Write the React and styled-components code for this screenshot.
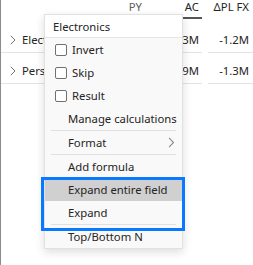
import React from "react";
import styled, { createGlobalStyle } from "styled-components";

const GlobalStyle = createGlobalStyle`
  html, body {
    margin: 0;
    padding: 0;
    background: #ffffff;
  }
  body {
    font-family: "Noto Sans", "Open Sans", sans-serif;
    font-size: 11.3px;
    color: #252423;
  }
`;

const Page = styled.div`
  position: relative;
  width: 253px;
  height: 265px;
  box-sizing: border-box;
  border-left: 1px solid #8c8c8c;
  overflow: hidden;
`;

const Table = styled.div`
  display: grid;
  grid-template-columns: 99px 40px 50px 45px;
  column-gap: 6px;
`;

const HeadCell = styled.div`
  height: 19px;
  margin-bottom: 3px;
  padding-top: 1px;
  box-sizing: border-box;
  border-bottom: 2px solid ${(p) => (p.$active ? "#555555" : "transparent")};
  text-align: right;
  padding-right: ${(p) => p.$pad || 4}px;
  line-height: 11px;
  color: ${(p) => (p.$muted ? "#605e5c" : "#252423")};
  white-space: nowrap;
`;

const Cell = styled.div`
  height: 31px;
  box-sizing: border-box;
  border-bottom: 1px solid #e3e3e3;
  display: flex;
  align-items: center;
  justify-content: ${(p) => (p.$label ? "flex-start" : "flex-end")};
  padding: 5px ${(p) => (p.$label ? 0 : p.$pad || 4)}px 0
    ${(p) => (p.$label ? 9 : 0)}px;
  white-space: nowrap;
  overflow: hidden;
`;

const Caret = styled.svg`
  width: 6px;
  height: 10px;
  margin-right: 6px;
  flex: none;
`;

const Menu = styled.div`
  position: absolute;
  left: 43px;
  top: 14px;
  width: 139px;
  box-sizing: border-box;
  border: 1px solid #e1e1e1;
  background: #f9f9f9;
  box-shadow: 0 3px 9px rgba(0, 0, 0, 0.14);
  z-index: 2;
`;

const MenuHeader = styled.div`
  height: 22px;
  background: #ffffff;
  border-bottom: 1px solid #e6e6e6;
  display: flex;
  align-items: center;
  padding-left: 8px;
`;

const Item = styled.div`
  height: 23px;
  display: flex;
  align-items: center;
  padding-left: ${(p) => (p.$check ? 10 : 23)}px;
  padding-right: 7px;
  background: ${(p) => (p.$hover ? "#d0d0d0" : "transparent")};
  white-space: nowrap;
`;

const Box = styled.span`
  width: 12px;
  height: 12px;
  box-sizing: border-box;
  border: 1px solid #707070;
  border-radius: 2px;
  background: #ffffff;
  margin-right: 5px;
  flex: none;
`;

const Divider = styled.div`
  height: 1px;
  margin: 0 6px 0 6px;
  background: #e0e0e0;
`;

const Spacer = styled.span`
  flex: 1;
`;

const Group = styled.div`
  position: relative;
  &::after {
    content: "";
    position: absolute;
    top: -1px;
    left: -4px;
    right: -3px;
    bottom: -6px;
    border: 3px solid #0a78ff;
    pointer-events: none;
  }
`;

const Chevron = ({ size = 10, color = "#8a8a8a" }) => (
  <svg width={size * 0.6} height={size} viewBox="0 0 6 10">
    <path d="M1 0.8 L5 5 L1 9.2" fill="none" stroke={color} strokeWidth="1" />
  </svg>
);

const rows = [
  { name: "Electronics", py: "11.8M", ac: "10.3M", fx: "-1.2M" },
  { name: "Personal Care", py: "9.6M", ac: "7.9M", fx: "-1.3M" },
];

export default function App() {
  return (
    <>
      <GlobalStyle />
      <Page>
        <Table>
          <HeadCell />
          <HeadCell $muted $pad={4}>PY</HeadCell>
          <HeadCell $active $pad={3}>AC</HeadCell>
          <HeadCell $pad={4}>ΔPL FX</HeadCell>
          {rows.map((r) => (
            <React.Fragment key={r.name}>
              <Cell $label>
                <Caret viewBox="0 0 6 10">
                  <path d="M0.8 0.8 L5 5 L0.8 9.2" fill="none" stroke="#707070" strokeWidth="1" />
                </Caret>
                <span>{r.name}</span>
              </Cell>
              <Cell>{r.py}</Cell>
              <Cell $pad={3}>{r.ac}</Cell>
              <Cell>{r.fx}</Cell>
            </React.Fragment>
          ))}
        </Table>

        <Menu>
          <MenuHeader>Electronics</MenuHeader>
          <Item $check>
            <Box />
            Invert
          </Item>
          <Item $check>
            <Box />
            Skip
          </Item>
          <Item $check>
            <Box />
            Result
          </Item>
          <Item>Manage calculations</Item>
          <Divider />
          <Item>
            Format
            <Spacer />
            <Chevron size={11} />
          </Item>
          <Divider />
          <Item>Add formula</Item>
          <Group>
            <Item $hover>Expand entire field</Item>
            <Item>Expand</Item>
            <Divider />
          </Group>
          <Item>Top/Bottom N</Item>
        </Menu>
      </Page>
    </>
  );
}
